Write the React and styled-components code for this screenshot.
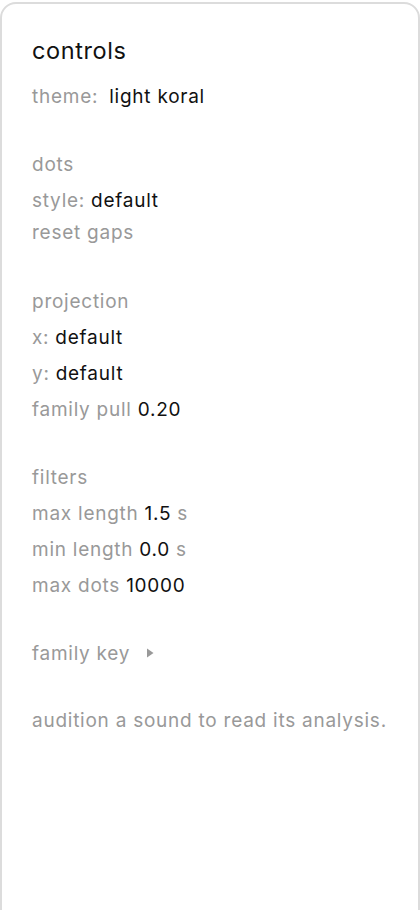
import React from 'react';
import styled, { createGlobalStyle } from 'styled-components';

const Global = createGlobalStyle`
  html, body {
    margin: 0;
    padding: 0;
    background: #fff;
  }
  body {
    font-family: Inter, "Liberation Sans", sans-serif;
    -webkit-font-smoothing: antialiased;
  }
`;

const Page = styled.div`
  width: 420px;
  height: 910px;
  overflow: hidden;
  padding-top: 2px;
  box-sizing: border-box;
`;

const Panel = styled.aside`
  box-sizing: border-box;
  width: 420px;
  min-height: 940px;
  border: 2px solid #dcdcdc;
  border-radius: 16px;
  background: #fff;
  padding: 33px 30px;
  color: #111;
`;

const Title = styled.h2`
  margin: 0 0 13px;
  font-size: 23.5px;
  font-weight: 400;
  letter-spacing: 0.6px;
  line-height: 28px;
  color: #111;
`;

const Section = styled.section`
  display: flex;
  flex-direction: column;
  margin-bottom: 32px;
`;

const Row = styled.div`
  display: flex;
  align-items: center;
  gap: ${props => props.gap || 6}px;
  height: 36px;
  font-size: 19px;
  letter-spacing: 0.75px;
  color: #999;
`;

const Value = styled.span`
  color: #111;
`;

const Unit = styled.span`
  color: #999;
`;

const TextButton = styled.button`
  all: unset;
  cursor: pointer;
  display: flex;
  align-items: center;
  gap: 16px;
  height: ${props => props.h || 36}px;
  margin-bottom: ${props => props.mb || 0}px;
  font-size: 19px;
  letter-spacing: 0.75px;
  color: #999;
`;

const Caret = styled.svg`
  width: 8px;
  height: 10px;
  fill: #999;
`;

const Note = styled.p`
  margin: 0;
  height: 36px;
  line-height: 36px;
  font-size: 19px;
  letter-spacing: 0.75px;
  color: #999;
`;

export default function App() {
  return (
    <Page>
      <Global />
      <Panel>
        <Title>controls</Title>
        <Section>
          <Row gap={11}>
            theme: <Value>light koral</Value>
          </Row>
        </Section>
        <Section>
          <Row>dots</Row>
          <Row>
            style: <Value>default</Value>
          </Row>
          <TextButton h={28} mb={5}>reset gaps</TextButton>
        </Section>
        <Section>
          <Row>projection</Row>
          <Row>
            x: <Value>default</Value>
          </Row>
          <Row>
            y: <Value>default</Value>
          </Row>
          <Row>
            family pull <Value>0.20</Value>
          </Row>
        </Section>
        <Section>
          <Row>filters</Row>
          <Row>
            max length <Value>1.5</Value> <Unit>s</Unit>
          </Row>
          <Row>
            min length <Value>0.0</Value> <Unit>s</Unit>
          </Row>
          <Row>
            max dots <Value>10000</Value>
          </Row>
        </Section>
        <Section>
          <TextButton>
            family key
            <Caret viewBox="0 0 8 10">
              <path d="M1 0.5 L7.5 5 L1 9.5 Z" />
            </Caret>
          </TextButton>
        </Section>
        <Note>audition a sound to read its analysis.</Note>
      </Panel>
    </Page>
  );
}
